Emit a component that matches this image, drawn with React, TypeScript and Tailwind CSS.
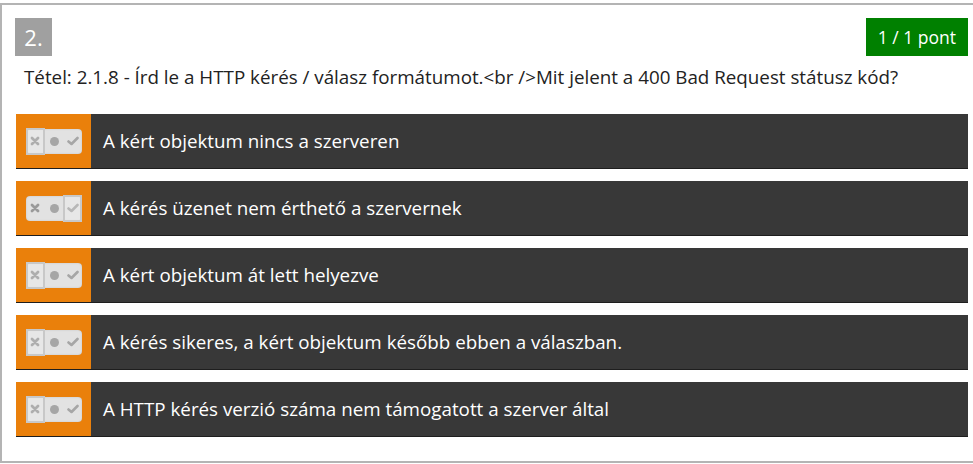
import { useState } from 'react';

interface AnswerOption {
  id: number;
  text: string;
  state: 'no' | 'yes';
}

const answers: AnswerOption[] = [
  { id: 1, text: 'A kért objektum nincs a szerveren', state: 'no' },
  { id: 2, text: 'A kérés üzenet nem érthető a szervernek', state: 'yes' },
  { id: 3, text: 'A kért objektum át lett helyezve', state: 'no' },
  { id: 4, text: 'A kérés sikeres, a kért objektum később ebben a válaszban.', state: 'no' },
  { id: 5, text: 'A HTTP kérés verzió száma nem támogatott a szerver által', state: 'no' },
];

function Toggle({ state }: { state: 'no' | 'yes' }) {
  return (
    <div className="relative w-[56px] h-[25px] rounded-[4px] bg-[#e2e2e2] shadow-[inset_0_0_2px_rgba(0,0,0,0.15)] flex items-center">
      <span className="w-[18px] flex justify-center">
        <svg width="10" height="10" viewBox="0 0 10 10">
          <path d="M2 2 L8 8 M8 2 L2 8" stroke="#9a9a9a" strokeWidth="2.8" strokeLinecap="round" />
        </svg>
      </span>
      <span className="w-[20px] flex justify-center">
        <span className="w-[9px] h-[9px] rounded-full bg-[#a6a6a6]" />
      </span>
      <span className="w-[18px] flex justify-center">
        <svg width="12" height="10" viewBox="0 0 12 10">
          <path d="M1.5 5.5 L4.5 8 L10.5 2" stroke="#a6a6a6" strokeWidth="2.6" fill="none" strokeLinecap="round" strokeLinejoin="round" />
        </svg>
      </span>
      <span
        className={`absolute top-[-1px] w-[19px] h-[27px] border-2 border-[#c8c8c8] bg-white/20 ${
          state === 'no' ? 'left-0' : 'right-0'
        }`}
      />
    </div>
  );
}

export default function App() {
  const [selected] = useState(answers);

  return (
    <div className="w-[973px] h-[464px] bg-white pt-[3px] font-['Open_Sans',sans-serif]">
      <div className="h-[460px] border-t-2 border-l-2 border-b-2 border-[#b4b4b4] pl-[14px] pr-[5px] pt-[13px]">
        <div className="flex justify-between items-start">
          <div className="ml-[-1px] w-[37px] h-[38px] bg-[#a0a0a0] text-white text-[22px] leading-[38px] text-center">
            2.
          </div>
          <div className="px-[12px] h-[38px] bg-[#008000] text-white text-[17.5px] leading-[38px]">
            1 / 1 pont
          </div>
        </div>
        <p className="mt-[8px] ml-[8px] text-[18.8px] leading-[26px] text-[#222]">
          Tétel: 2.1.8 - Írd le a HTTP kérés / válasz formátumot.&lt;br /&gt;Mit jelent a 400 Bad Request státusz kód?
        </p>
        <div className="mt-[24px] flex flex-col gap-[12px]">
          {selected.map((answer) => (
            <div key={answer.id} className="flex h-[55px] bg-[#383838] border-b border-[#1e1e1e]">
              <div className="w-[75px] bg-[#ea800b] flex items-center justify-center pl-[1px]">
                <Toggle state={answer.state} />
              </div>
              <div className="flex items-center pl-[12px] text-white text-[18.8px]">{answer.text}</div>
            </div>
          ))}
        </div>
      </div>
    </div>
  );
}
